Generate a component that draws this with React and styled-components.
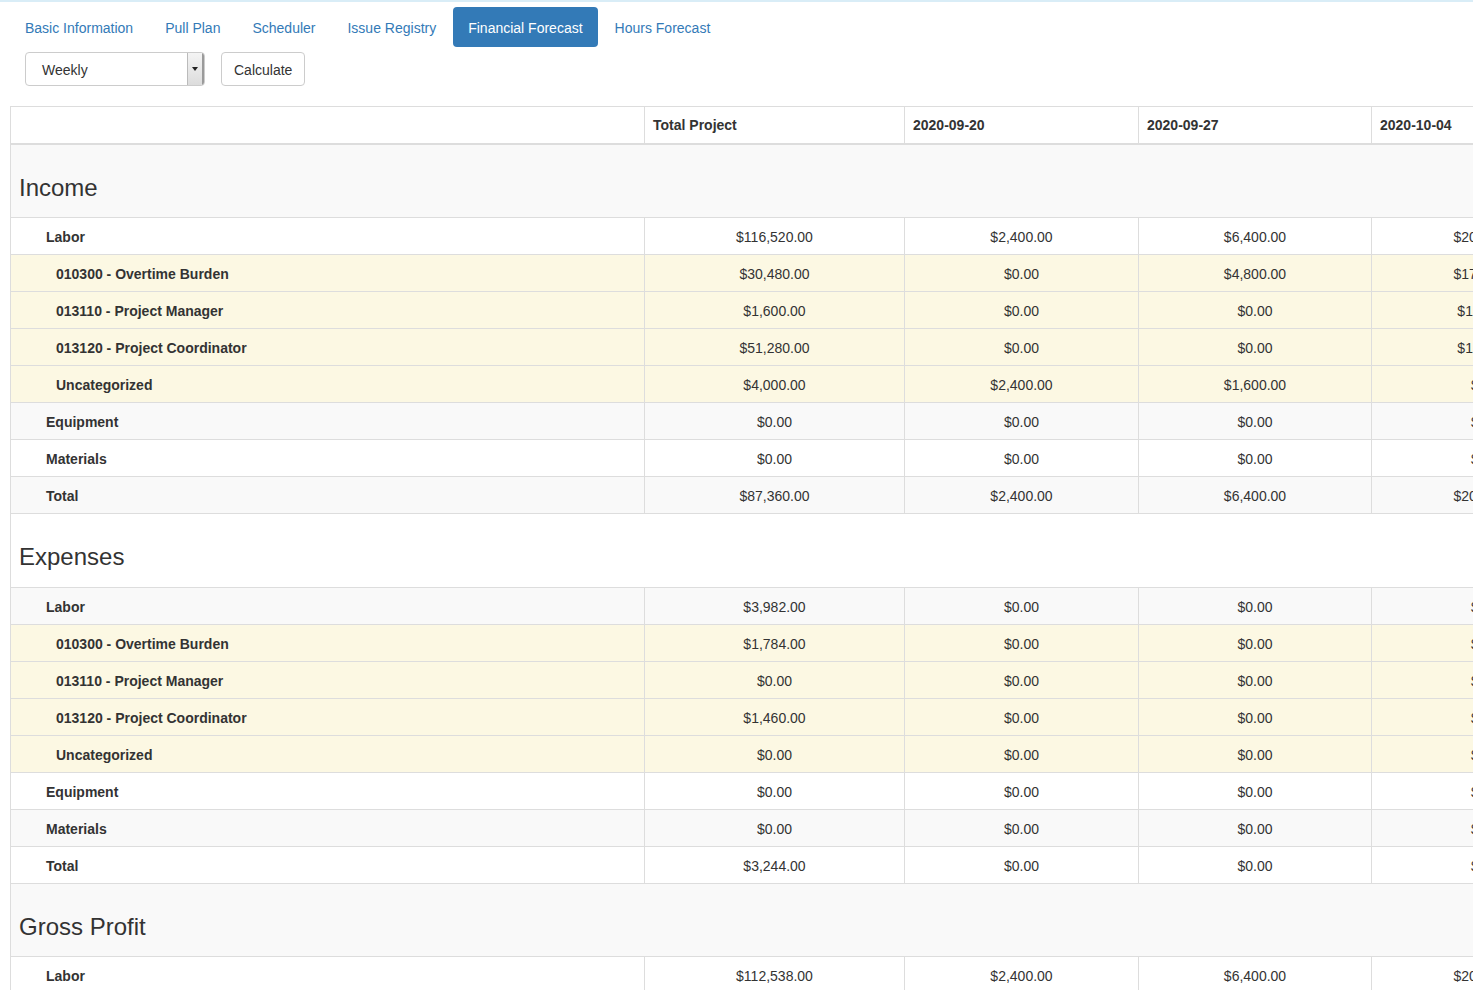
import React, { useState } from "react";
import styled, { createGlobalStyle } from "styled-components";

const GlobalStyle = createGlobalStyle`
  html, body {
    margin: 0;
    padding: 0;
    overflow: hidden;
    background: #fff;
  }
  body {
    border-top: 2px solid #d9edf7;
    font-family: "Liberation Sans", Arial, sans-serif;
    font-size: 14px;
    line-height: 1.42857;
    color: #333;
  }
`;

const Page = styled.div`
  padding: 5px 0 0 10px;
`;

const Pills = styled.ul`
  display: flex;
  gap: 2px;
  list-style: none;
  margin: 0;
  padding: 0;
`;

const Pill = styled.li`
  padding: 12px 15px 8px;
  border-radius: 4px;
  cursor: pointer;
  color: ${(p) => (p.$active ? "#fff" : "#337ab7")};
  background: ${(p) => (p.$active ? "#337ab7" : "transparent")};
`;

const Controls = styled.div`
  display: flex;
  gap: 16px;
  padding: 5px 0 0 15px;
  height: 34px;
`;

const SelectBox = styled.div`
  display: flex;
  width: 180px;
  height: 34px;
  box-sizing: border-box;
  border: 1px solid #ccc;
  border-radius: 4px;
  background: #fff;
  overflow: hidden;
`;

const SelectText = styled.div`
  flex: 1;
  padding: 8px 0 0 16px;
  color: #333;
`;

const SelectArrow = styled.div`
  width: 14px;
  display: flex;
  align-items: center;
  justify-content: center;
  background: linear-gradient(#f4f4f4, #dcdcdc);
  border-left: 1px solid #bbb;
  border-right: 2px solid #9a9a9a;
`;

const Caret = styled.span`
  width: 0;
  height: 0;
  border-left: 3px solid transparent;
  border-right: 3px solid transparent;
  border-top: 4px solid #222;
`;

const Button = styled.button`
  height: 34px;
  padding: 8px 12px 4px;
  font: inherit;
  color: #333;
  background: #fff;
  border: 1px solid #ccc;
  border-radius: 4px;
  cursor: pointer;
`;

const TableWrap = styled.div`
  margin-top: 20px;
  overflow: hidden;
`;

const Table = styled.table`
  border-collapse: collapse;
  table-layout: fixed;
  width: 2331px;
  border: 1px solid #ddd;
`;

const HeadCell = styled.th`
  padding: 9px 8px 7px;
  text-align: left;
  font-weight: bold;
  border: 1px solid #ddd;
  border-bottom: 2px solid #ddd;
  white-space: nowrap;
`;

const Row = styled.tr`
  background: ${(p) =>
    p.$tone === "warning" ? "#fcf8e3" : p.$striped ? "#f9f9f9" : "#fff"};
`;

const LabelCell = styled.td`
  padding: 10px 8px 6px ${(p) => (p.$sub ? "45px" : "35px")};
  font-weight: bold;
  border: 1px solid #ddd;
  white-space: nowrap;
`;

const ValueCell = styled.td`
  padding: 10px 8px 6px;
  text-align: center;
  border: 1px solid #ddd;
  white-space: nowrap;
`;

const SectionCell = styled.td`
  padding: 8px;
  border: 1px solid #ddd;
`;

const SectionTitle = styled.h3`
  margin: 22px 0 8px;
  font-size: 24px;
  font-weight: 500;
  line-height: 1.1;
`;

const tabs = [
  "Basic Information",
  "Pull Plan",
  "Scheduler",
  "Issue Registry",
  "Financial Forecast",
  "Hours Forecast",
];

const dates = [
  "2020-09-20",
  "2020-09-27",
  "2020-10-04",
  "2020-10-11",
  "2020-10-18",
  "2020-10-25",
  "2020-11-01",
];

const widths = [634, 260, 234, 233, 234, 234, 234, 234, 234];

const zeros = ["$0.00", "$0.00", "$0.00", "$0.00", "$0.00"];

const sections = [
  {
    title: "Income",
    rows: [
      { label: "Labor", total: "$116,520.00", weeks: ["$2,400.00", "$6,400.00", "$20,800.00", "$16,000.00", "$12,800.00", "$9,600.00", "$8,000.00"] },
      { label: "010300 - Overtime Burden", sub: true, total: "$30,480.00", weeks: ["$0.00", "$4,800.00", "$17,600.00", "$4,000.00", "$2,080.00", "$1,000.00", "$1,000.00"] },
      { label: "013110 - Project Manager", sub: true, total: "$1,600.00", weeks: ["$0.00", "$0.00", "$1,600.00", "$0.00", "$0.00", "$0.00", "$0.00"] },
      { label: "013120 - Project Coordinator", sub: true, total: "$51,280.00", weeks: ["$0.00", "$0.00", "$1,600.00", "$8,000.00", "$9,600.00", "$8,600.00", "$7,000.00"] },
      { label: "Uncategorized", sub: true, total: "$4,000.00", weeks: ["$2,400.00", "$1,600.00", "$0.00", "$0.00", "$0.00", "$0.00", "$0.00"] },
      { label: "Equipment", total: "$0.00", weeks: ["$0.00", "$0.00", ...zeros] },
      { label: "Materials", total: "$0.00", weeks: ["$0.00", "$0.00", ...zeros] },
      { label: "Total", total: "$87,360.00", weeks: ["$2,400.00", "$6,400.00", "$20,800.00", "$16,000.00", "$12,800.00", "$9,600.00", "$8,000.00"] },
    ],
  },
  {
    title: "Expenses",
    rows: [
      { label: "Labor", total: "$3,982.00", weeks: ["$0.00", "$0.00", ...zeros] },
      { label: "010300 - Overtime Burden", sub: true, total: "$1,784.00", weeks: ["$0.00", "$0.00", ...zeros] },
      { label: "013110 - Project Manager", sub: true, total: "$0.00", weeks: ["$0.00", "$0.00", ...zeros] },
      { label: "013120 - Project Coordinator", sub: true, total: "$1,460.00", weeks: ["$0.00", "$0.00", ...zeros] },
      { label: "Uncategorized", sub: true, total: "$0.00", weeks: ["$0.00", "$0.00", ...zeros] },
      { label: "Equipment", total: "$0.00", weeks: ["$0.00", "$0.00", ...zeros] },
      { label: "Materials", total: "$0.00", weeks: ["$0.00", "$0.00", ...zeros] },
      { label: "Total", total: "$3,244.00", weeks: ["$0.00", "$0.00", ...zeros] },
    ],
  },
  {
    title: "Gross Profit",
    rows: [
      { label: "Labor", total: "$112,538.00", weeks: ["$2,400.00", "$6,400.00", "$20,800.00", "$16,000.00", "$12,800.00", "$9,600.00", "$8,000.00"] },
      { label: "Equipment", total: "$0.00", weeks: ["$0.00", "$0.00", ...zeros] },
      { label: "Materials", total: "$0.00", weeks: ["$0.00", "$0.00", ...zeros] },
      { label: "Total", total: "$84,116.00", weeks: ["$2,400.00", "$6,400.00", "$20,800.00", "$16,000.00", "$12,800.00", "$9,600.00", "$8,000.00"] },
    ],
  },
];

const App = () => {
  const [activeTab, setActiveTab] = useState("Financial Forecast");

  // flatten so the stripes follow the row index, like bootstrap's table-striped
  let index = 0;
  const body = [];
  sections.forEach((section) => {
    index += 1;
    body.push(
      <Row key={section.title} $striped={index % 2 === 1}>
        <SectionCell colSpan={dates.length + 2}>
          <SectionTitle>{section.title}</SectionTitle>
        </SectionCell>
      </Row>
    );
    section.rows.forEach((row) => {
      index += 1;
      body.push(
        <Row
          key={section.title + row.label}
          $striped={index % 2 === 1}
          $tone={row.sub ? "warning" : undefined}
        >
          <LabelCell $sub={row.sub}>{row.label}</LabelCell>
          <ValueCell>{row.total}</ValueCell>
          {row.weeks.map((w, i) => (
            <ValueCell key={i}>{w}</ValueCell>
          ))}
        </Row>
      );
    });
  });

  return (
    <Page>
      <GlobalStyle />
      <Pills>
        {tabs.map((t) => (
          <Pill key={t} $active={t === activeTab} onClick={() => setActiveTab(t)}>
            {t}
          </Pill>
        ))}
      </Pills>
      <Controls>
        <SelectBox>
          <SelectText>Weekly</SelectText>
          <SelectArrow>
            <Caret />
          </SelectArrow>
        </SelectBox>
        <Button>Calculate</Button>
      </Controls>
      <TableWrap>
        <Table>
          <colgroup>
            {widths.map((w, i) => (
              <col key={i} style={{ width: w }} />
            ))}
          </colgroup>
          <thead>
            <tr>
              <HeadCell />
              <HeadCell>Total Project</HeadCell>
              {dates.map((d) => (
                <HeadCell key={d}>{d}</HeadCell>
              ))}
            </tr>
          </thead>
          <tbody>{body}</tbody>
        </Table>
      </TableWrap>
    </Page>
  );
};

export default App;
